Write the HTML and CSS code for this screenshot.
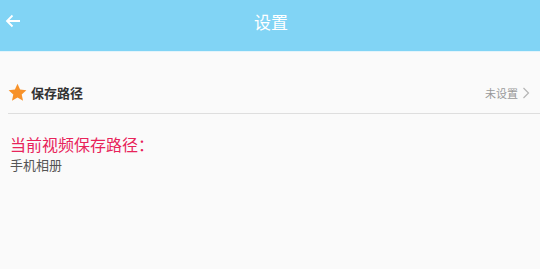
FILE: index.html
```html
<!DOCTYPE html>
<html lang="zh">
<head>
<meta charset="utf-8">
<link rel="stylesheet" href="styles.css">
</head>
<body>
<header class="bar">
  <svg class="back" width="16" height="14" viewBox="0 0 16 14"><path d="M15 7H2M7.5 1.5L2 7l5.5 5.5" fill="none" stroke="#fff" stroke-width="1.8"/></svg>
  <h1 class="title">设置</h1>
</header>
<main class="content">
  <div class="row">
    <svg class="star" width="19" height="19" viewBox="0 0 24 24"><path d="M12 1l3.3 7.3 7.9.8-5.9 5.4 1.7 7.8L12 18.3l-7 4 1.7-7.8L.8 9.1l7.9-.8z" fill="#f7922a"/></svg>
    <span class="label">保存路径</span>
    <span class="value">未设置</span>
    <svg class="chev" width="8" height="12" viewBox="0 0 8 12"><path d="M1.5 1l5 5-5 5" fill="none" stroke="#b5b5b5" stroke-width="1.2"/></svg>
  </div>
  <div class="info">
    <div class="info-title">当前视频保存路径：</div>
    <div class="info-value">手机相册</div>
  </div>
</main>
</body>
</html>
```
FILE: styles.css
```css
html, body {
  margin: 0;
  padding: 0;
  background: #fafafa;
  font-family: "Noto Sans CJK SC", "Noto Sans", sans-serif;
}
.bar {
  height: 51px;
  background: #81d4f5;
  display: flex;
  align-items: center;
  justify-content: center;
  position: relative;
  border-bottom: 1px solid #e3f4fb;
}
.back {
  position: absolute;
  left: 5px;
  top: 14px;
}
.title {
  margin: 0 0 8px 2px;
  font-size: 17px;
  font-weight: normal;
  color: #fff;
}
.content {
  padding-top: 20px;
}
.row {
  margin-left: 8px;
  height: 41px;
  display: flex;
  align-items: center;
  border-bottom: 1px solid #dedede;
}
.star {
  margin-right: 4px;
}
.label {
  font-size: 13px;
  font-weight: bold;
  color: #333;
  flex: 1;
}
.value {
  font-size: 11px;
  color: #999;
  margin-right: 4px;
}
.chev {
  margin-right: 10px;
}
.info {
  padding: 20px 10px 0;
}
.info-title {
  font-size: 16px;
  font-weight: normal;
  color: #e8245a;
  line-height: 20px;
}
.info-value {
  font-size: 13px;
  color: #555;
  line-height: 22px;
}
```
